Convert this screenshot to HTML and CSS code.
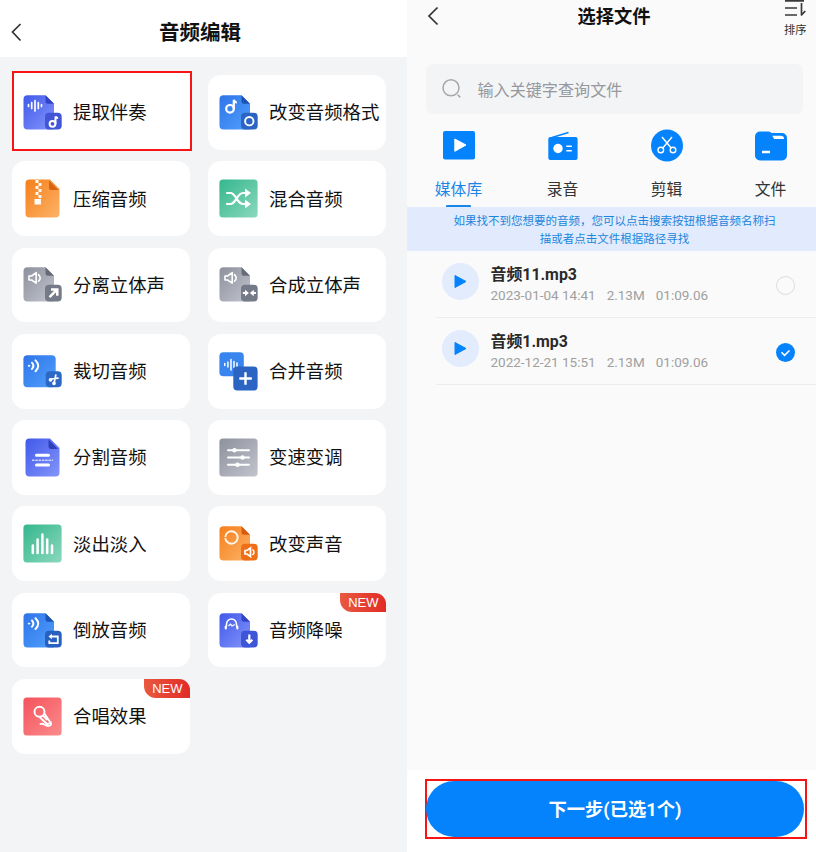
FILE: index.html
```
<!DOCTYPE html>
<html lang="zh-CN">
<head>
	<meta charset="utf-8">
	<title>音频编辑</title>
	<meta name="viewport" content="width=device-width" />
	<link rel="stylesheet" href="styles.css">
</head>
<body>

<!-- shared gradients and icon parts -->
<svg class="defs" aria-hidden="true">
	<defs>
		<linearGradient id="indigo" x1="0" y1="0" x2="1" y2="1"><stop offset="0" stop-color="#4059ea"/><stop offset="1" stop-color="#8495fa"/></linearGradient>
		<linearGradient id="blue" x1="0" y1="0" x2="1" y2="1"><stop offset="0" stop-color="#2f74ea"/><stop offset="1" stop-color="#4fa0fb"/></linearGradient>
		<linearGradient id="orange" x1="0" y1="0" x2="1" y2="1"><stop offset="0" stop-color="#f57f1a"/><stop offset="1" stop-color="#fdb368"/></linearGradient>
		<linearGradient id="green" x1="0" y1="0" x2="1" y2="1"><stop offset="0" stop-color="#34b78d"/><stop offset="1" stop-color="#8bd8bd"/></linearGradient>
		<linearGradient id="gray" x1="0" y1="0" x2="1" y2="1"><stop offset="0" stop-color="#8d919d"/><stop offset="1" stop-color="#c2c4cd"/></linearGradient>
		<linearGradient id="red" x1="0" y1="0" x2="1" y2="1"><stop offset="0" stop-color="#f5525c"/><stop offset="1" stop-color="#fa8c8c"/></linearGradient>
		<path id="doc" d="M4.5 2.3H22.5L31 10.8V36.5H4.5a4 4 0 0 1-4-4V6.3a4 4 0 0 1 4-4z"/>
		<path id="fold" d="M22.5 2.3L31 10.8H25a2.5 2.5 0 0 1-2.5-2.5z"/>
		<rect id="badge" x="22" y="19.7" width="16.7" height="16.8" rx="4"/>
		<rect id="tile" x=".4" y=".4" width="38.2" height="38.2" rx="3.5"/>
		<g id="speaker" fill="none" stroke="#fff" stroke-width="1.6" stroke-linejoin="round"><path d="M6 11h2.6l4.6-3.400v10.600L8.600 15H6z"/><path d="M15.500 9.600q3.400 3.300 0 6.600" stroke-linecap="round"/></g>
		<g id="waves" fill="none" stroke="#fff" stroke-width="2" stroke-linecap="round"><circle cx="6" cy="12.600" r=".7" fill="#fff" stroke-width="1"/><path d="M9 9.500q2.800 3.100 0 6.200M12.500 7.200q5.500 5.400 0 10.800"/></g>
	</defs>
</svg>

<div class="screens">
	<div class="editor">
		<div class="editor-head">
			<svg class="back" width="12" height="20" viewBox="0 0 12 20"><path d="M10.500 2L2.500 10l8 8.500"/></svg>
			<h1>音频编辑</h1>
		</div>

		<div class="tools">
			<div class="tool marked">
				<svg viewBox="0 0 39 39"><use href="#doc" fill="url(#indigo)"/><use href="#fold" fill="#3443c6"/><use href="#badge" fill="#4254d8"/>
					<path d="M5.500 11.500v2M8.700 9.500v6M12 7.500v10.500M15.300 9.500v6M18.500 11.500v2" stroke="#fff" stroke-width="1.700" stroke-linecap="round"/>
					<g fill="none" stroke="#fff" stroke-width="2"><circle cx="29.500" cy="30.800" r="2.900"/><path d="M32.500 31v-7.500q.8 1.600 2.600 1.600"/></g></svg>
				<span>提取伴奏</span>
			</div>
			<div class="tool">
				<svg viewBox="0 0 39 39"><use href="#doc" fill="url(#blue)"/><use href="#fold" fill="#1c53b4"/><use href="#badge" fill="#2c64c4"/>
					<g fill="none" stroke="#fff" stroke-width="2.200"><circle cx="11" cy="15.800" r="3.800"/><path d="M14.800 16V7q1 2.500 3 2.300"/><circle cx="30.300" cy="28.200" r="4.200" stroke-width="1.900"/></g></svg>
				<span>改变音频格式</span>
			</div>
			<div class="tool">
				<svg viewBox="0 0 39 39"><path d="M6.500.5H27L36.500 10v24.500a4 4 0 0 1-4 4h-26a4 4 0 0 1-4-4v-30a4 4 0 0 1 4-4z" fill="url(#orange)"/><path d="M26 1.500l9.500 9.500H28q-2 0-2-2z" fill="#d96412"/>
					<path d="M12.500 1h3v3h-3zM15.500 4h3v3h-3zM12.500 7h3v3h-3zM15.500 10h3v3h-3zM12.500 13h3v3h-3zM15.500 16h3v3h-3zM11.500 20h6.500v5.500h-6.500z" fill="#fff" opacity=".95"/></svg>
				<span>压缩音频</span>
			</div>
			<div class="tool">
				<svg viewBox="0 0 39 39"><use href="#tile" fill="url(#green)"/>
					<path d="M8 14h3.500c5.500 0 6.500 11 12.500 11h4M8 25h3.500c5.500 0 6.500-11 12.500-11h4" fill="none" stroke="#fff" stroke-width="2.200" stroke-linecap="round"/><path d="M26 9.500l6 4.500-6 4.500zM26 20.500l6 4.500-6 4.500z" fill="#fff"/></svg>
				<span>混合音频</span>
			</div>
			<div class="tool">
				<svg viewBox="0 0 39 39"><use href="#doc" fill="url(#gray)"/><use href="#fold" fill="#666b78"/><use href="#badge" fill="#757a88"/><use href="#speaker"/>
					<path d="M26.500 32.200l7-7M28 24.500h6.300v6.300" fill="none" stroke="#fff" stroke-width="2.500"/></svg>
				<span>分离立体声</span>
			</div>
			<div class="tool">
				<svg viewBox="0 0 39 39"><use href="#doc" fill="url(#gray)"/><use href="#fold" fill="#666b78"/><use href="#badge" fill="#757a88"/><use href="#speaker"/>
					<path d="M23.800 28h3M37 28h-3" fill="none" stroke="#fff" stroke-width="2"/><path d="M26 24.800l3.900 3.200-3.900 3.200zM34.800 24.800L30.900 28l3.900 3.200z" fill="#fff"/></svg>
				<span>合成立体声</span>
			</div>
			<div class="tool">
				<svg viewBox="0 0 39 39"><rect x=".4" y="3.300" width="32.300" height="32" rx="4" fill="url(#blue)"/><rect x="22.700" y="19.300" width="16" height="16" rx="4" fill="#2d69c4"/><g transform="translate(0 1.200)"><use href="#waves"/></g>
					<g fill="none" stroke="#fff" stroke-width="1.700" stroke-linecap="round"><path d="M28.500 27l6.500-.8M31.300 30.300l1.500-7.300"/><circle cx="27.500" cy="27.800" r="1"/><circle cx="31" cy="31.300" r="1"/></g></svg>
				<span>裁切音频</span>
			</div>
			<div class="tool">
				<svg viewBox="0 0 39 39"><rect x=".4" y=".2" width="24.400" height="24" rx="4" fill="#3985f0"/>
					<path d="M5.800 11.500v2M8.900 10v5M12 7.500v10.500M15 9.500v6M18 11v3.500" stroke="#fff" stroke-width="1.500" stroke-linecap="round"/>
					<rect x="14.300" y="14.500" width="24.300" height="24" rx="4" fill="#2b64c3"/><path d="M20.300 26.500h12.500M26.500 20.300v12.500" stroke="#fff" stroke-width="2.400"/></svg>
				<span>合并音频</span>
			</div>
			<div class="tool">
				<svg viewBox="0 0 39 39"><path d="M6.500.5H27L36.500 10v24.500a4 4 0 0 1-4 4h-26a4 4 0 0 1-4-4v-30a4 4 0 0 1 4-4z" fill="url(#indigo)"/><path d="M25.500 1.500l9.500 9.500H28q-2.500 0-2.500-2z" fill="#3040bd"/>
					<path d="M13.500 17.300h12M13.500 27h12" stroke="#fff" stroke-width="3" stroke-linecap="round"/><path d="M9 22.200h21" stroke="#fff" stroke-width="1" stroke-dasharray="2.500 .8"/></svg>
				<span>分割音频</span>
			</div>
			<div class="tool">
				<svg viewBox="0 0 39 39"><use href="#tile" fill="url(#gray)"/>
					<path d="M9 12.300h21M9 19.500h21M9 26.700h21" stroke="#fff" stroke-width="2" stroke-linecap="round"/><g fill="#fff"><circle cx="15.500" cy="12.300" r="2.200"/><circle cx="23.500" cy="19.500" r="2.200"/><circle cx="18.500" cy="26.700" r="2.200"/></g></svg>
				<span>变速变调</span>
			</div>
			<div class="tool">
				<svg viewBox="0 0 39 39"><use href="#tile" fill="url(#green)"/>
					<path d="M9.800 21.500v7.500M14.600 15.500V29M19.400 10.500V29M24.200 15.500V29M29 21.500v7.500" stroke="#fff" stroke-width="2.500" stroke-linecap="round"/></svg>
				<span>淡出淡入</span>
			</div>
			<div class="tool">
				<svg viewBox="0 0 39 39"><use href="#doc" fill="url(#orange)"/><use href="#fold" fill="#d85a0c"/><use href="#badge" fill="#ee7016"/>
					<g fill="none" stroke="#fff"><circle cx="12.500" cy="13.500" r="6.200" stroke-width="2" stroke-dasharray="18.500 1" opacity=".9"/></g>
					<path d="M26 26.500h2l3.500-2.500v8.500L28 30h-2z" fill="none" stroke="#fff" stroke-width="1.700"/><path d="M33.500 25.500q3 2.700 0 5.500" fill="none" stroke="#fff" stroke-width="1.500"/></svg>
				<span>改变声音</span>
			</div>
			<div class="tool">
				<svg viewBox="0 0 39 39"><use href="#doc" fill="url(#blue)"/><use href="#fold" fill="#1c53b4"/><use href="#badge" fill="#2860c0"/><use href="#waves"/>
					<path d="M26.300 29.500v2.700h8.500v-6.700h-7" fill="none" stroke="#fff" stroke-width="1.800"/><path d="M25.500 25.500l3.300-2.700v5.400z" fill="#fff"/></svg>
				<span>倒放音频</span>
			</div>
			<div class="tool">
				<svg viewBox="0 0 39 39"><use href="#doc" fill="url(#indigo)"/><use href="#fold" fill="#3443c6"/><use href="#badge" fill="#3f55d8"/>
					<g fill="none" stroke="#fff" stroke-width="1.500" stroke-linecap="round"><path d="M7.500 15v-1.500a5 5.500 0 0 1 10 0V15"/><path d="M6.800 15.500v2M18.300 15.500v2" stroke-width="2.200"/><path d="M9.800 14.500l1.700-1.300 1.500 1.800 2.300-1.300" stroke-width="1.200"/></g>
					<path d="M30.300 23.500v8M27.300 28.800l3 3 3-3" fill="none" stroke="#fff" stroke-width="2.200"/></svg>
				<span>音频降噪</span>
				<b class="new">NEW</b>
			</div>
			<div class="tool">
				<svg viewBox="0 0 39 39"><use href="#tile" fill="url(#red)"/>
					<g fill="none" stroke="#fff" stroke-width="1.900" stroke-linejoin="round" stroke-linecap="round"><circle cx="16.500" cy="14.800" r="5"/><path d="M16.800 20.200l7.700 7.300 2.900-2-6-9M20.500 19l3 3.500"/><path d="M17.500 27c3-1.500 4.500 2 7.500 2 2.500 0 3.700-1.500 2.500-4"/></g></svg>
				<span>合唱效果</span>
				<b class="new">NEW</b>
			</div>
		</div>
	</div>

	<div class="picker">
		<div class="picker-head">
			<svg class="back" width="12" height="20" viewBox="0 0 12 20"><path d="M10.500 1.500L2 10l8.500 8.500"/></svg>
			<h2>选择文件</h2>
			<div class="sort">
				<svg width="22" height="18" viewBox="0 0 22 18"><path d="M1 .8h19M1 8h12M1 15h12M17.500 3v12.500M21.300 11l-4.200 4.300" fill="none" stroke="#3a3a3a" stroke-width="1.700"/></svg>
				<span>排序</span>
			</div>
		</div>

		<div class="search">
			<svg width="20" height="20" viewBox="0 0 20 20"><g fill="none" stroke="#a5a7ab" stroke-width="1.500"><circle cx="9" cy="8.800" r="8"/><path d="M15.600 15.800l2.700 2.600"/></g></svg>
			<span>输入关键字查询文件</span>
		</div>

		<div class="tabs">
			<div class="tab active">
				<svg width="34" height="34" viewBox="0 0 34 34"><rect x="1" y="2" width="32" height="28.500" rx="2" fill="#0583fd"/><path d="M12.800 10L24 16l-11.200 6.300z" fill="#fff" stroke="#fff" stroke-linejoin="round"/></svg>
				<span>媒体库</span>
			</div>
			<div class="tab">
				<svg width="34" height="34" viewBox="0 0 34 34"><rect x="2.300" y="8" width="29.300" height="23" rx="2" fill="#0583fd"/><path d="M6 8.500l16.500-5" stroke="#0583fd" stroke-width="1.500"/><circle cx="12" cy="19.500" r="4.700" fill="#fff"/><path d="M20.300 17.300h5.500M20.300 21.800h5.500" stroke="#fff" stroke-width="1.500"/></svg>
				<span>录音</span>
			</div>
			<div class="tab">
				<svg width="34" height="34" viewBox="0 0 34 34"><circle cx="17" cy="16.500" r="16" fill="#0583fd"/><g fill="none" stroke="#fff" stroke-width="1.400"><circle cx="10.800" cy="21" r="2.800"/><circle cx="23" cy="21" r="2.800"/><path d="M12 8l9.200 11M22 8l-9.200 11"/></g></svg>
				<span>剪辑</span>
			</div>
			<div class="tab">
				<svg width="34" height="34" viewBox="0 0 34 34"><path d="M6 2.500h8.500q2 0 3 1.500H28a5 5 0 0 1 5 5v17.500a5 5 0 0 1-5 5H6a5 5 0 0 1-5-5v-19a5 5 0 0 1 5-5z" fill="#0583fd"/><path d="M18.200 6.800h8.500q3.300 0 3.300 3.200H20.200z" fill="#fff"/><path d="M8 23h8" stroke="#fff" stroke-width="2.500"/></svg>
				<span>文件</span>
			</div>
		</div>

		<p class="tip">如果找不到您想要的音频，您可以点击搜索按钮根据音频名称扫<br>描或者点击文件根据路径寻找</p>

		<div class="files">
			<div class="file">
				<div class="play"><svg width="13" height="15" viewBox="0 0 13 15"><path d="M1 1.500l11 6-11 6z"/></svg></div>
				<div class="info">
					<h3>音频11.mp3</h3>
					<p><span>2023-01-04 14:41</span><span>2.13M</span><span>01:09.06</span></p>
				</div>
				<div class="check"></div>
			</div>
			<div class="file">
				<div class="play"><svg width="13" height="15" viewBox="0 0 13 15"><path d="M1 1.500l11 6-11 6z"/></svg></div>
				<div class="info">
					<h3>音频1.mp3</h3>
					<p><span>2022-12-21 15:51</span><span>2.13M</span><span>01:09.06</span></p>
				</div>
				<div class="check on"><svg width="19" height="19" viewBox="0 0 19 19"><path d="M5.500 9.300l3 3 5-4.800"/></svg></div>
			</div>
		</div>

		<div class="bottom">
			<div class="next-box"><div class="next">下一步(已选1个)</div></div>
		</div>
	</div>
</div>

</body>
</html>
```

FILE: styles.css
```
* {
    box-sizing: border-box;
}

body {
    margin: 0;
    font-family: Roboto, "Noto Sans CJK SC", sans-serif;
    color: #111;
}

h1, h2, h3, p {
    margin: 0;
}

svg {
    display: block;
    flex: none;
}

.defs {
    position: absolute;
    width: 0;
    height: 0;
}

.screens {
    display: flex;
    width: 816px;
    height: 852px;
    overflow: hidden;
}

.back path {
    fill: none;
    stroke: #333;
    stroke-width: 1.7;
}

/* left screen */
.editor {
    flex: none;
    width: 407px;
    background-color: #f3f4f6;
}

.editor-head {
    display: flex;
    align-items: center;
    height: 57px;
    padding: 7px 0 0 10px;
    background-color: #fff;
}

.editor-head h1 {
    flex: 1;
    margin-right: 29px;
    padding-top: 2px;
    text-align: center;
    font-size: 20.5px;
    line-height: 30px;
}

.tools {
    display: grid;
    grid-template-columns: 178px 178px;
    grid-auto-rows: 74.7px;
    gap: 11.6px 18px;
    padding: 18px 0 0 12.3px;
}

.tool {
    position: relative;
    display: flex;
    align-items: center;
    padding-left: 10.7px;
    border-radius: 13px;
    background-color: #fff;
    font-size: 18.4px;
    line-height: 28px;
    white-space: nowrap;
}

.tool svg {
    width: 39px;
    height: 39px;
    margin-right: 11px;
}

.tool span {
    padding-top: 2px;
}

.marked::before {
    content: "";
    position: absolute;
    z-index: -1;
    inset: -3.7px -1.5px -1.3px -.3px;
    border: 2px solid #f81414;
    background-color: #fff;
}

.marked {
    z-index: 0;
}

.new {
    position: absolute;
    top: 0;
    right: 0;
    width: 46px;
    height: 19px;
    border-radius: 0 11px 0 12px;
    background: linear-gradient(90deg, #e9593f, #e22b26);
    color: #fff;
    font: 13px/20px "Liberation Sans", sans-serif;
    text-align: center;
}

/* right screen, runs a few pixels past the window */
.picker {
    display: flex;
    flex-direction: column;
    flex: none;
    width: 415px;
    background-color: #fafafa;
}

.picker-head {
    display: flex;
    align-items: flex-start;
    height: 64px;
    padding: 0 15px 0 20px;
}

.picker-head .back {
    margin-top: 6px;
}

.picker-head h2 {
    flex: 1;
    margin: 3px 0 0 -3px;
    padding-left: 8px;
    text-align: center;
    font-size: 18.3px;
    line-height: 27px;
}

.sort {
    width: 23px;
    color: #333;
    font-size: 11.3px;
    line-height: 16px;
    white-space: nowrap;
}

.sort span {
    display: block;
    margin-top: 5px;
}

.search {
    display: flex;
    align-items: center;
    gap: 16px;
    height: 50px;
    margin: 0 19px;
    padding-left: 15.5px;
    border-radius: 7px;
    background-color: #f3f4f6;
    color: #96989c;
    font-size: 16.1px;
}

.tabs {
    display: grid;
    grid-template-columns: repeat(4, 104px);
    height: 93px;
    padding-top: 15px;
    margin-left: -.5px;
}

.tab {
    display: flex;
    flex-direction: column;
    align-items: center;
    gap: 15px;
    color: #333;
    font-size: 15.8px;
    line-height: 24px;
}

.active {
    color: #1a86e8;
}

.active::after {
    content: "";
    width: 25px;
    height: 2.5px;
    margin-top: -12px;
    border-radius: 1px;
    background-color: #1a86e8;
}

.tip {
    height: 44px;
    padding-top: 6px;
    background-color: #e1ebfd;
    color: #1c86dc;
    font-size: 11.5px;
    line-height: 17.5px;
    text-align: center;
    white-space: nowrap;
}

.file {
    display: flex;
    height: 67px;
    margin-left: 29px;
    padding: 12px 0 0 6px;
    border-bottom: 1px solid #ededed;
}

.play {
    display: flex;
    align-items: center;
    justify-content: center;
    width: 37px;
    height: 37px;
    border-radius: 50%;
    background-color: #e2ecfd;
}

.play path {
    fill: #0583fd;
    stroke: #0583fd;
    stroke-linejoin: round;
}

.info {
    flex: 1;
    margin-left: 11.5px;
}

.info h3 {
    padding-top: 1px;
    font-size: 15.9px;
    line-height: 22px;
    color: #2a2a2a;
}

.info p {
    display: flex;
    gap: 11px;
    margin-top: -1px;
    color: #a0a0a0;
    font-size: 13.5px;
    line-height: 20px;
}

.check {
    width: 19px;
    height: 19px;
    margin: 13px 27.5px 0 0;
    border: 1.5px solid #dcdcdc;
    border-radius: 50%;
}

.on {
    border: 0;
    background-color: #0583fd;
}

.on path {
    fill: none;
    stroke: #fff;
    stroke-width: 1.6;
}

.bottom {
    margin-top: auto;
    height: 82px;
    padding: 9px 15px 0 18px;
    background-color: #fff;
}

.next-box {
    width: 382px;
    height: 60px;
    border: 2px solid #f81414;
}

.next {
    width: 378px;
    height: 56px;
    margin-left: -1px;
    border-radius: 28px;
    background-color: #0583fd;
    color: #fff;
    font-size: 18.3px;
    font-weight: bold;
    line-height: 58px;
    text-align: center;
}
```
